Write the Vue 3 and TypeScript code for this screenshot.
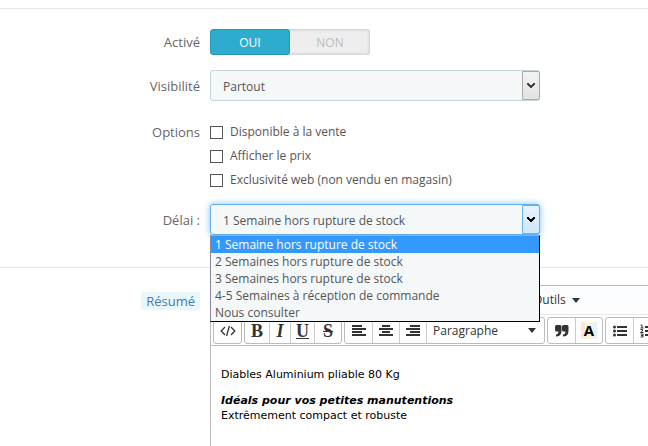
<script setup lang="ts">
import { ref } from 'vue'

const active = ref(true)
const visibility = ref('Partout')
const delay = ref(0)
const block = ref('Paragraphe')

const flags = ref([
  { id: 'available', label: 'Disponible à la vente', on: false },
  { id: 'price', label: 'Afficher le prix', on: false },
  { id: 'web', label: 'Exclusivité web (non vendu en magasin)', on: false },
])

const delays: string[] = [
  '1 Semaine hors rupture de stock',
  '2 Semaines hors rupture de stock',
  '3 Semaines hors rupture de stock',
  '4-5 Semaines à réception de commande',
  'Nous consulter',
]
</script>

<template>
  <main class="page">
    <section class="panel">
      <div class="row">
        <span class="name">Activé</span>
        <div class="switch" role="radiogroup" aria-label="Activé">
          <label :class="{ on: active }"><input v-model="active" type="radio" name="active" :value="true" />OUI</label>
          <label :class="{ on: !active }"><input v-model="active" type="radio" name="active" :value="false" />NON</label>
        </div>
      </div>

      <div class="row">
        <label class="name" for="visibility">Visibilité</label>
        <div class="field">
          <select id="visibility" v-model="visibility">
            <option>Partout</option>
          </select>
          <span class="arrow"><svg viewBox="0 0 8 6" width="8" height="6"><path d="M0 0h2v1h1v1h2V1h1V0h2v2H7v1H6v1H5v1H3V4H2V3H1V2H0z" /></svg></span>
        </div>
      </div>

      <div class="row options">
        <span class="name">Options</span>
        <div class="checks">
          <label v-for="f in flags" :key="f.id" :for="f.id">
            <input :id="f.id" v-model="f.on" type="checkbox" />{{ f.label }}
          </label>
        </div>
      </div>

      <div class="row">
        <label class="name" for="delay">Délai :</label>
        <div class="field open">
          <select id="delay" v-model="delay">
            <option v-for="(d, i) in delays" :key="d" :value="i">{{ d }}</option>
          </select>
          <span class="arrow"><svg viewBox="0 0 8 6" width="8" height="6"><path d="M0 0h2v1h1v1h2V1h1V0h2v2H7v1H6v1H5v1H3V4H2V3H1V2H0z" /></svg></span>
          <ul class="list" role="listbox" aria-label="Délai">
            <li
              v-for="(d, i) in delays"
              :key="d"
              role="option"
              :aria-selected="i === delay"
              :class="{ selected: i === delay }"
              @click="delay = i"
            >{{ d }}</li>
          </ul>
        </div>
      </div>
    </section>

    <section class="panel summary">
      <div class="name"><span class="hint">Résumé</span></div>
      <div class="editor">
        <div class="menubar">
          <button type="button">Outils<i class="caret"></i></button>
        </div>
        <div class="toolbar">
          <div class="group">
            <button type="button" class="wide" aria-label="Code source">
              <svg width="16" height="12" viewBox="0 0 16 12" fill="none" stroke="#333" stroke-width="1.3"><path d="M5 2 1.2 6 5 10M11 2l3.8 4L11 10M9.4 1 6.6 11" /></svg>
            </button>
          </div>
          <div class="group">
            <button type="button" class="letter">B</button>
            <button type="button" class="letter slim italic">I</button>
            <button type="button" class="letter under">U</button>
            <button type="button" class="letter wide strike">S</button>
          </div>
          <div class="group">
            <button type="button" class="wide" aria-label="Aligner à gauche">
              <svg width="14" height="12" viewBox="0 0 14 12" fill="#333"><path d="M0 0h10v2H0zM0 3h14v2H0zM0 6h10v2H0zM0 9h14v2H0z" /></svg>
            </button>
            <button type="button" class="wide" aria-label="Centrer">
              <svg width="14" height="12" viewBox="0 0 14 12" fill="#333"><path d="M3 0h8v2H3zM0 3h14v2H0zM3 6h8v2H3zM0 9h14v2H0z" /></svg>
            </button>
            <button type="button" class="wide" aria-label="Aligner à droite">
              <svg width="14" height="12" viewBox="0 0 14 12" fill="#333"><path d="M4 0h10v2H4zM0 3h14v2H0zM4 6h10v2H4zM0 9h14v2H0z" /></svg>
            </button>
            <div class="format">
              <select v-model="block" aria-label="Format">
                <option>Paragraphe</option>
              </select>
              <i class="caret"></i>
            </div>
          </div>
          <div class="group">
            <button type="button" class="wide" aria-label="Citation">
              <svg width="14" height="12" viewBox="0 0 14 12" fill="#333"><path d="M1.500 0H5q1.500 0 1.500 1.500V6q0 5-5 5.500H1V9.500q2.500-.3 2.500-3H1.500Q0 6.500 0 5V1.500Q0 0 1.500 0zM8.500 0H12q1.500 0 1.500 1.500V6q0 5-5 5.500H8V9.500q2.500-.3 2.500-3H8.500Q7 6.500 7 5V1.500Q7 0 8.500 0z" /></svg>
            </button>
            <button type="button" class="wide color"><span>A</span></button>
          </div>
          <div class="group">
            <button type="button" class="wide" aria-label="Liste à puces">
              <svg width="14" height="12" viewBox="0 0 14 12" fill="#333"><path d="M4 1h10v2H4zM4 5h10v2H4zM4 9h10v2H4z" /><circle cx="1.500" cy="2" r="1.500" /><circle cx="1.500" cy="6" r="1.500" /><circle cx="1.500" cy="10" r="1.500" /></svg>
            </button>
            <button type="button" class="wide" aria-label="Liste numérotée">
              <svg width="14" height="14" viewBox="0 0 14 14" fill="#333"><path d="M5 2h9v2H5zM5 6h9v2H5zM5 10h9v2H5z" /><path d="M.5 1H2v3M.5 4h3M.5 5.500h2v1.500L.5 8.500h3M.5 10h2.500v3H.5M1 11.500h2" fill="none" stroke="#333" /></svg>
            </button>
          </div>
        </div>
        <div class="content">
          <p>Diables Aluminium pliable 80 Kg</p>
          <p><strong><em>Idéals pour vos petites manutentions</em></strong><br />Extrêmement compact et robuste</p>
        </div>
      </div>
    </section>
  </main>
</template>

<style>
body {
  background: #fff;
}
</style>

<style scoped>
* {
  box-sizing: border-box;
}
.page {
  display: flex;
  flex-direction: column;
  min-height: 100vh;
  padding-top: 8px;
  overflow: hidden;
  color: #555;
  font: 12px/18px 'Open Sans', sans-serif;
}
button,
select,
input {
  margin: 0;
  font: inherit;
  color: inherit;
}
.panel {
  border-top: 1px solid #e6e6e6;
  padding: 20px 0 32px;
}
.row {
  display: grid;
  grid-template-columns: 200px minmax(0, 330px);
  column-gap: 10px;
  align-items: center;
  margin-bottom: 15px;
}
.row:last-child {
  margin-bottom: 0;
}
.name {
  font-size: 13px;
  text-align: right;
  color: #666;
}
.switch {
  display: flex;
  width: 160px;
  height: 26px;
  border-radius: 3px;
  overflow: hidden;
  background: #eee;
  box-shadow: inset 0 0 3px 1px #ccc;
}
.switch label {
  position: relative;
  width: 50%;
  line-height: 27px;
  text-align: center;
  color: #bbb;
}
.switch .on {
  border: 1px solid #2596b8;
  border-radius: 3px;
  background: #2eacce;
  line-height: 25px;
  color: #fff;
}
.switch input {
  position: absolute;
  inset: 0;
  opacity: 0;
}
.field {
  position: relative;
}
.field select {
  display: block;
  width: 100%;
  height: 31px;
  padding: 2px 30px 0 12px;
  border: 1px solid #c3d3d8;
  border-radius: 3px;
  outline: 0;
  background: #f4f8f9;
  appearance: none;
}
.arrow {
  position: absolute;
  top: 1px;
  right: 0;
  bottom: 1px;
  display: grid;
  place-items: center;
  width: 18px;
  border: 1px solid #aaa;
  border-radius: 0 2px 2px 0;
  background: linear-gradient(#f3f3f3, #e2e2e2);
  fill: #444;
  pointer-events: none;
}
.field.open select {
  border-color: #66afe9;
  box-shadow: 0 0 7px #7fc0f0;
}
.open .arrow {
  border-color: #6aaeea;
  background: linear-gradient(#eaf4fd, #cfe5fa);
  fill: #000;
}
.list {
  position: absolute;
  z-index: 1;
  top: 31px;
  left: 0;
  right: 0;
  margin: 0;
  padding: 0;
  border: 1px solid #000;
  border-top-color: #9ab;
  border-left-color: #889;
  background: #f4f8f9;
  list-style: none;
  line-height: 17px;
}
.list li {
  padding: 0 4px;
}
.list .selected {
  background: #3399ff;
  color: #fff;
}
.options {
  align-items: start;
  margin: 22px 0 15px;
}
.checks {
  display: grid;
  row-gap: 6px;
}
.checks label {
  display: flex;
  align-items: center;
  gap: 7px;
}
.checks input {
  width: 13px;
  height: 13px;
  border: 1px solid #555;
  background: #fff;
  appearance: none;
}
.checks input:checked {
  background: #555;
}
.summary {
  flex: 1;
  display: grid;
  grid-template-columns: 200px minmax(0, 1fr);
  column-gap: 10px;
  padding: 17px 0 0;
}
.summary .name {
  padding-top: 7px;
}
.hint {
  display: inline-block;
  padding: 0 5px;
  border-radius: 3px;
  background: #e9f6fb;
  color: #4a7ba6;
}
.editor {
  display: flex;
  flex-direction: column;
  border: 1px solid #bbb;
  border-width: 1px 0 0 1px;
  overflow: hidden;
  color: #333;
}
.menubar {
  height: 29px;
  padding-left: 322px;
  border-bottom: 1px solid #e8e8e8;
  background: #fcfdfe;
}
.menubar button {
  display: flex;
  align-items: center;
  gap: 6px;
  height: 28px;
  padding: 0;
  border: 0;
  background: none;
}
.caret {
  border: 4px solid transparent;
  border-top: 5px solid #333;
  border-bottom: 0;
}
.toolbar {
  display: flex;
  gap: 2px;
  padding: 2px 2px 1px;
  border-bottom: 1px solid #bbb;
}
.group {
  display: flex;
  flex: none;
  height: 27px;
  border: 1px solid #bbb;
  border-radius: 3px;
}
.group button {
  display: grid;
  place-items: center;
  width: 24px;
  padding: 0;
  border: 0;
  background: none;
}
.group > * + *,
.group > button + button {
  border-left: 1px solid #ccc;
}
.group .wide {
  width: 27px;
}
.group .slim {
  width: 21px;
}
.group .letter {
  font: bold 18px/20px 'Liberation Serif', serif;
}
.group .italic {
  font-style: italic;
}
.group .under {
  text-decoration: underline;
}
.group .strike {
  text-decoration: line-through;
}
.color span {
  width: 16px;
  background: linear-gradient(90deg, #fbe3dc, #fdf6d8, #dff3f8);
  font: bold 15px/17px 'Open Sans', sans-serif;
  color: #000;
}
.format {
  display: flex;
  align-items: center;
  width: 118px;
  padding: 0 8px 0 6px;
}
.format select {
  flex: 1;
  padding: 0;
  border: 0;
  outline: 0;
  background: none;
  appearance: none;
}
.content {
  flex: 1;
  padding: 21px 10px 0;
  color: #000;
  font: 11px/15px 'DejaVu Sans', sans-serif;
}
.content p {
  margin: 0 0 11px;
}
</style>
